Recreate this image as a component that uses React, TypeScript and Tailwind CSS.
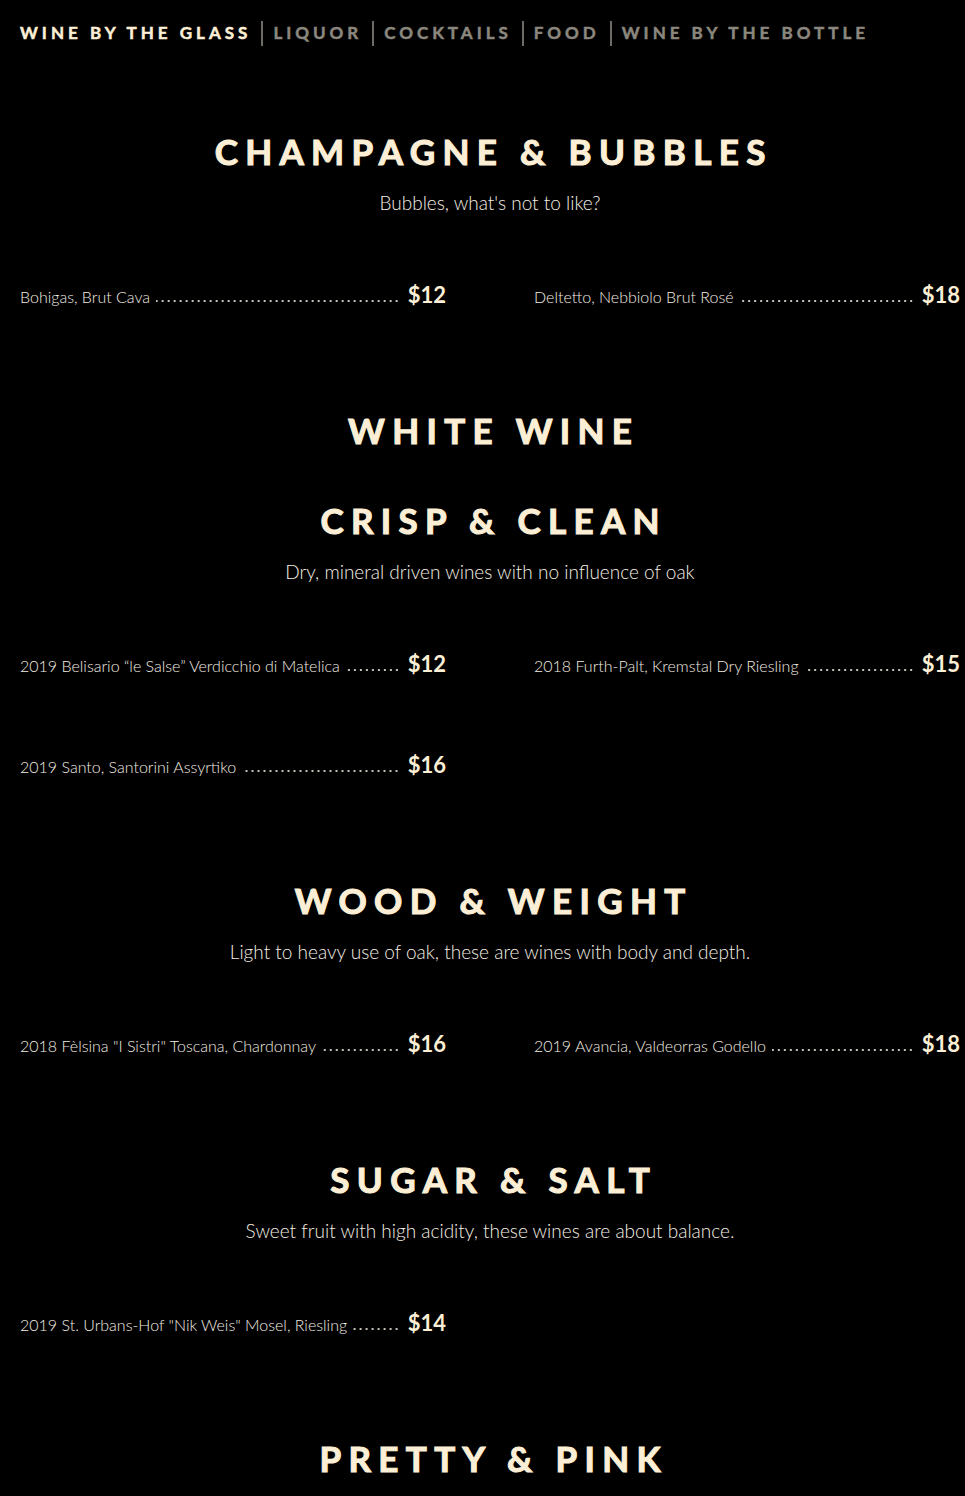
import React from "react";

type Item = { name: string; price: string };

const cream = "text-[#fcefd6]";

function Leader() {
  return (
    <div className="flex-1 min-w-0 ml-[6px] mr-[8px] h-[4px] bg-[radial-gradient(circle,#c9c3b8_0.7px,transparent_1.1px)] bg-[length:6px_4px] bg-repeat-x bg-right-bottom" />
  );
}

function Row({ item }: { item: Item }) {
  return (
    <div className="flex items-baseline h-[30px]">
      <span className="text-[16px] font-light text-[#f3ece0] whitespace-nowrap [font-family:Lato,'Open_Sans',sans-serif]">
        {item.name}
      </span>
      <Leader />
      <span className="text-[22px] font-bold text-[#fcefd6] [font-family:Lato,sans-serif]">
        {item.price}
      </span>
    </div>
  );
}

function Heading({ children, className = "" }: { children: React.ReactNode; className?: string }) {
  return (
    <div className={`h-[46px] flex items-center justify-center ${className}`}>
      <h2
        className={`text-[35px] font-bold tracking-[0.21em] ${cream} [font-family:Lato,sans-serif] leading-none pl-[0.21em] [-webkit-text-stroke:1.1px_#fcefd6]`}
      >
        {children}
      </h2>
    </div>
  );
}

function Subtitle({ children }: { children: React.ReactNode }) {
  return (
    <div className="mt-[17px] h-[24px] flex items-center justify-center">
      <p className="text-[19px] font-light text-[#f5efe4] [font-family:Lato,sans-serif]">{children}</p>
    </div>
  );
}

function Items({ rows }: { rows: (Item | null)[][] }) {
  return (
    <div className="mt-[63px] flex flex-col gap-[71px]">
      {rows.map((r, i) => (
        <div key={i} className="grid grid-cols-[426px_426px] gap-x-[88px]">
          {r.map((it, j) => (it ? <Row key={j} item={it} /> : <div key={j} />))}
        </div>
      ))}
    </div>
  );
}

const nav = ["WINE BY THE GLASS", "LIQUOR", "COCKTAILS", "FOOD", "WINE BY THE BOTTLE"];

export default function App() {
  return (
    <div className="min-h-[1496px] bg-black pl-[20px] pr-[5px] overflow-hidden">
      <nav className="h-[66px] flex items-center">
        {nav.map((n, i) => (
          <React.Fragment key={n}>
            {i > 0 && <span className="mr-[10px] w-[2px] h-[25px] bg-[#6f6c66]" />}
            <span
              className={`text-[17px] font-bold tracking-[0.235em] [font-family:Lato,sans-serif] ${
                i === 0
                  ? "text-[#fcefd6] [-webkit-text-stroke:0.5px_#fcefd6]"
                  : "text-[#8b877e] [-webkit-text-stroke:0.5px_#8b877e]"
              } ${i < nav.length - 1 ? "mr-[10px]" : ""}`}
            >
              {n}
            </span>
          </React.Fragment>
        ))}
      </nav>

      <section className="mt-[62px]">
        <Heading>CHAMPAGNE &amp; BUBBLES</Heading>
        <Subtitle>Bubbles, what's not to like?</Subtitle>
        <Items
          rows={[
            [
              { name: "Bohigas, Brut Cava", price: "$12" },
              { name: "Deltetto, Nebbiolo Brut Rosé", price: "$18" },
            ],
          ]}
        />
      </section>

      <section className="mt-[99px]">
        <Heading>WHITE WINE</Heading>
        <Heading className="mt-[44px]">CRISP &amp; CLEAN</Heading>
        <Subtitle>Dry, mineral driven wines with no influence of oak</Subtitle>
        <Items
          rows={[
            [
              { name: "2019 Belisario “le Salse” Verdicchio di Matelica", price: "$12" },
              { name: "2018 Furth-Palt, Kremstal Dry Riesling", price: "$15" },
            ],
            [{ name: "2019 Santo, Santorini Assyrtiko", price: "$16" }, null],
          ]}
        />
      </section>

      <section className="mt-[99px]">
        <Heading>WOOD &amp; WEIGHT</Heading>
        <Subtitle>Light to heavy use of oak, these are wines with body and depth.</Subtitle>
        <Items
          rows={[
            [
              { name: "2018 Fèlsina \"I Sistri\"  Toscana, Chardonnay", price: "$16" },
              { name: "2019 Avancia, Valdeorras Godello", price: "$18" },
            ],
          ]}
        />
      </section>

      <section className="mt-[99px]">
        <Heading>SUGAR &amp; SALT</Heading>
        <Subtitle>Sweet fruit with high acidity, these wines are about balance.</Subtitle>
        <Items rows={[[{ name: "2019 St. Urbans-Hof \"Nik Weis\" Mosel, Riesling", price: "$14" }, null]]} />
      </section>

      <section className="mt-[99px]">
        <Heading>PRETTY &amp; PINK</Heading>
      </section>
    </div>
  );
}
